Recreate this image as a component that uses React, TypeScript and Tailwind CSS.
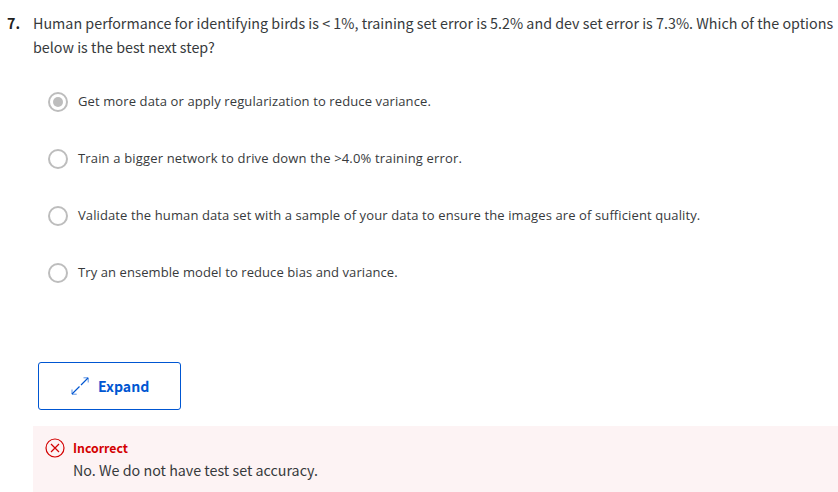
const options = [
  { text: 'Get more data or apply regularization to reduce variance.', checked: true, tracking: 'tracking-[0.11px]' },
  { text: 'Train a bigger network to drive down the >4.0% training error.', checked: false, tracking: 'tracking-[0.16px]' },
  { text: 'Validate the human data set with a sample of your data to ensure the images are of sufficient quality.', checked: false, tracking: 'tracking-[0.11px]' },
  { text: 'Try an ensemble model to reduce bias and variance.', checked: false, tracking: 'tracking-[0.08px]' },
];

export default function App() {
  return (
    <main className="h-[492px] w-[838px] overflow-hidden bg-white font-['Noto_Sans_CJK_SC','Noto_Sans',sans-serif] text-[14.3px] leading-6 text-[#373a3c]">
      <div className="flex pt-[11px]">
        <div className="w-[33px] shrink-0 pl-[7px] font-bold text-[#1f1f1f]">7.</div>
        <h1 className="whitespace-nowrap tracking-[0.008px]">
          Human performance for identifying birds is &lt; 1%, training set error is 5.2% and dev set error is 7.3%. Which of the options
          <br />
          below is the best next step?
        </h1>
      </div>
      <div className="flex flex-col gap-[33px] pt-[31px] pl-12">
        {options.map((option) => (
          <label key={option.text} className="flex h-6 items-center gap-[10px]">
            <span className="flex size-5 shrink-0 items-center justify-center rounded-full border-2 border-[#bdbdbd]">
              {option.checked && <span className="size-[10px] rounded-full bg-[#bdbdbd]" />}
            </span>
            <span className={`-mt-0.5 whitespace-nowrap font-['Open_Sans','Noto_Sans',sans-serif] text-[13px] ${option.tracking}`}>{option.text}</span>
          </label>
        ))}
      </div>
      <button className="mt-[77px] ml-[38px] flex h-12 w-[143px] items-center rounded-[3px] border border-[#0056d2] pl-8 text-[14.1px] font-bold text-[#0056d2]">
        <svg width="18" height="18" viewBox="0 0 18 18" fill="none" stroke="#0056d2"><path d="M12.500 .8h4.700v4.700M1 12.500v4.700h4.700" strokeOpacity=".65" /><path d="M17 1l-7 7M1 17l7.500-7.500" strokeWidth="1.2" /></svg>
        <span className="ml-[9px]">Expand</span>
      </button>
      <section className="mt-4 ml-[33px] flex h-[66px] bg-[#fdf3f4] pt-3 pl-3">
        <svg width="20" height="20" viewBox="0 0 20 20" fill="none" stroke="#d30001" strokeWidth="1.2"><circle cx="10" cy="10" r="9" /><path d="m6 6 8 8m0-8-8 8" /></svg>
        <div className="-mt-0.5 ml-2">
          <p className="text-[12.3px] font-bold text-[#d30001]">Incorrect</p>
          <p className="-mt-0.5">No. We do not have test set accuracy.</p>
        </div>
      </section>
    </main>
  );
}
